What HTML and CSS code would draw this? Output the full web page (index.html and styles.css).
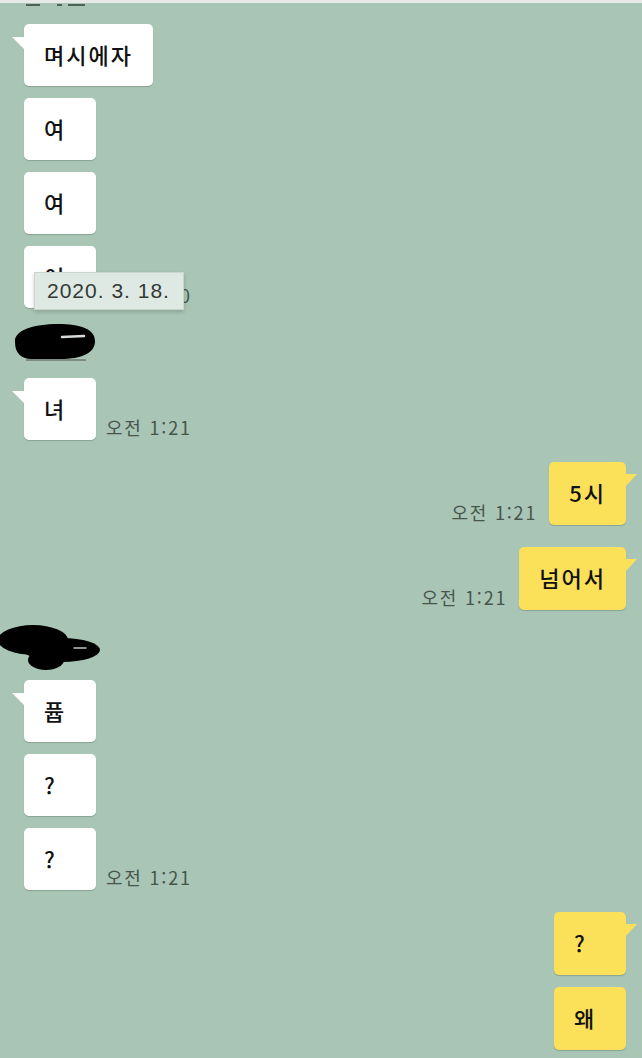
FILE: index.html
```html
<!DOCTYPE html>
<html lang="ko">
<head>
<meta charset="utf-8">
<link rel="stylesheet" href="styles.css">
</head>
<body>
<div class="topbar"></div>
<div class="cut-name"><span class="m1"></span><span class="m2"></span><span class="m3"></span></div>
<main class="chat">
  <div class="row left"><div class="bubble white tail">며시에자</div></div>
  <div class="row left"><div class="bubble white">여</div></div>
  <div class="row left"><div class="bubble white">여</div></div>
  <div class="row left"><div class="bubble white">여</div><span class="time">오전 1:20</span><div class="tooltip">2020. 3. 18.</div></div>

  <div class="name">
    <svg width="110" height="46" viewBox="0 0 110 46">
      <path d="M15 22 C14 10 34 4 58 4 C80 4 95 9 95 21 C95 33 82 39 60 39 L32 39 C20 39 15 32 15 22 Z" fill="#000"/>
      <path d="M62 17 L84 16" stroke="#d8dcd8" stroke-width="2.5" stroke-linecap="round"/>
      <path d="M26 40 L86 40" stroke="#555" stroke-width="1"/>
    </svg>
  </div>

  <div class="row left wide"><div class="bubble white tail">녀</div><span class="time">오전 1:21</span></div>

  <div class="row right wide"><span class="time">오전 1:21</span><div class="bubble yellow tail">5시</div></div>
  <div class="row right"><span class="time">오전 1:21</span><div class="bubble yellow tail">넘어서</div></div>

  <div class="name">
    <svg width="110" height="50" viewBox="0 0 110 50">
      <ellipse cx="33" cy="18" rx="35" ry="15" fill="#000"/>
      <ellipse cx="62" cy="28" rx="38" ry="12" fill="#000"/>
      <ellipse cx="46" cy="38" rx="18" ry="10" fill="#000"/>
      <path d="M74 26 L86 26" stroke="#bfc4c0" stroke-width="1.5" stroke-linecap="round"/>
    </svg>
  </div>

  <div class="row left"><div class="bubble white tail">퓹</div></div>
  <div class="row left"><div class="bubble white">?</div></div>
  <div class="row left wide"><div class="bubble white">?</div><span class="time">오전 1:21</span></div>

  <div class="row right"><div class="bubble yellow tail">?</div></div>
  <div class="row right"><div class="bubble yellow">왜</div></div>
</main>
</body>
</html>
```
FILE: styles.css
```css
html, body {
  margin: 0;
  padding: 0;
}
body {
  background: #a9c5b6;
  font-family: "Noto Sans CJK KR", "Noto Sans", sans-serif;
  width: 642px;
  height: 1058px;
  overflow: hidden;
}
.topbar {
  height: 3px;
  background: #e6e9e7;
}
.cut-name {
  height: 21px;
  position: relative;
}
.cut-name span {
  position: absolute;
  top: 1px;
  height: 2px;
  background: #2a3530;
  opacity: 0.7;
}
.cut-name .m1 { left: 26px; width: 14px; }
.cut-name .m2 { left: 57px; width: 5px; }
.cut-name .m3 { left: 68px; width: 17px; }

.chat {
  display: flex;
  flex-direction: column;
  padding: 0 16px 0 24px;
}
.row {
  display: flex;
  align-items: flex-end;
  gap: 10px;
  margin-bottom: 12px;
  position: relative;
}
.row.right {
  justify-content: flex-end;
  gap: 12px;
}
.row.wide {
  margin-bottom: 22px;
}
.bubble {
  position: relative;
  box-sizing: border-box;
  min-width: 72px;
  height: 62px;
  padding: 0 20px 3px 20px;
  display: flex;
  align-items: center;
  font-size: 22px;
  font-weight: 500;
  letter-spacing: 2px;
  color: #111;
  border-radius: 5px;
  box-shadow: 0 1px 1px rgba(40, 60, 50, 0.25);
}
.bubble.white {
  background: #ffffff;
}
.bubble.yellow {
  background: #fbe05a;
  height: 63px;
}
.bubble.tail::before {
  content: "";
  position: absolute;
  top: 13px;
  width: 12px;
  height: 12px;
}
.bubble.white.tail::before {
  left: -12px;
  background: #ffffff;
  clip-path: polygon(0 0, 100% 0, 100% 100%);
}
.bubble.yellow.tail::before {
  right: -11px;
  top: 12px;
  width: 11px;
  background: #fbe05a;
  clip-path: polygon(0 0, 100% 0, 0 100%);
}
.time {
  font-size: 18px;
  letter-spacing: 1.8px;
  color: #46554c;
  line-height: 22px;
  margin-bottom: 2px;
  white-space: nowrap;
}
.tooltip {
  position: absolute;
  left: 10px;
  top: 26px;
  box-sizing: border-box;
  width: 150px;
  height: 38px;
  padding: 0 12px;
  display: flex;
  align-items: center;
  background: #dfe9e3;
  border: 1px solid #c9d6ce;
  box-shadow: 0 2px 4px rgba(0, 0, 0, 0.18);
  font-family: "Liberation Sans", Arial, sans-serif;
  font-size: 21px;
  color: #333a36;
  letter-spacing: 1px;
}
.name {
  height: 46px;
  margin: 0 0 12px -24px;
}
.name svg {
  display: block;
  overflow: visible;
}
```
